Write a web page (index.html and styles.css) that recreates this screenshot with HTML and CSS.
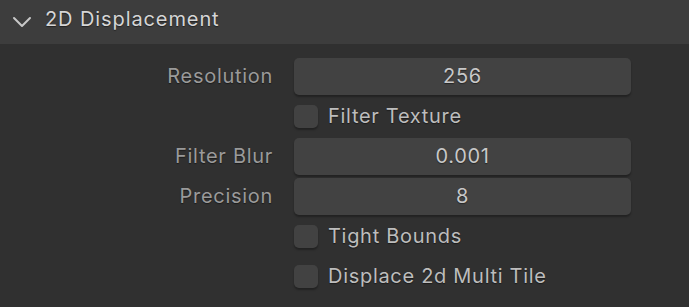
FILE: index.html
```html
<!DOCTYPE html>
<html lang="en">
<head>
  <meta charset="UTF-8">
  <title>2D Displacement</title>
  <link rel="stylesheet" href="styles.css">
</head>
<body>

<div class="panel">
  <div class="panel-header">
    <svg class="chevron" width="20" height="12" viewBox="0 0 20 12">
      <path d="M2 2 L10 10 L18 2" fill="none" stroke="#c8c8c8" stroke-width="2" stroke-linecap="round" stroke-linejoin="round"/>
    </svg>
    <span class="panel-title">2D Displacement</span>
  </div>

  <div class="panel-body">
    <div class="prop">
      <span class="prop-label">Resolution</span>
      <div class="field">256</div>
    </div>
    <div class="prop">
      <span class="prop-label"></span>
      <label class="check"><span class="box"></span>Filter Texture</label>
    </div>
    <div class="prop">
      <span class="prop-label">Filter Blur</span>
      <div class="field">0.001</div>
    </div>
    <div class="prop">
      <span class="prop-label">Precision</span>
      <div class="field">8</div>
    </div>
    <div class="prop">
      <span class="prop-label"></span>
      <label class="check"><span class="box"></span>Tight Bounds</label>
    </div>
    <div class="prop">
      <span class="prop-label"></span>
      <label class="check"><span class="box"></span>Displace 2d Multi Tile</label>
    </div>
  </div>
</div>

</body>
</html>
```

FILE: styles.css
```css
body {
  margin: 0;
  background-color: #303030;
  font-family: Inter, "Noto Sans", sans-serif;
  color: #c4c4c4;
  text-shadow: 0 1px 1px rgba(0, 0, 0, 0.45);
}
.panel-header {
  display: flex;
  align-items: center;
  height: 44px;
  background-color: #3d3d3d;
  padding-left: 12px;
}
.chevron {
  margin-right: 13px;
}
.panel-title {
  font-size: 20px;
  letter-spacing: 0.9px;
  color: #d6d6d6;
  padding-bottom: 6px;
}
.panel-body {
  padding-top: 12px;
}
.prop {
  display: flex;
  align-items: center;
  height: 40px;
}
.prop-label {
  width: 273px;
  padding-right: 21px;
  text-align: right;
  font-size: 20px;
  letter-spacing: 0.7px;
  color: #9a9a9a;
}
.field {
  width: 337px;
  height: 37px;
  line-height: 37px;
  text-align: center;
  font-size: 20px;
  letter-spacing: 0.7px;
  color: #c8c8c8;
  background-color: #424242;
  border-radius: 5px;
  box-shadow: 0 2px 2px rgba(0, 0, 0, 0.3);
}
.check {
  display: flex;
  align-items: center;
  font-size: 20px;
  letter-spacing: 0.7px;
  color: #bdbdbd;
}
.box {
  width: 24px;
  height: 23px;
  margin-right: 10px;
  background-color: #424242;
  border-radius: 5px;
  box-shadow: 0 2px 2px rgba(0, 0, 0, 0.3);
}
```
